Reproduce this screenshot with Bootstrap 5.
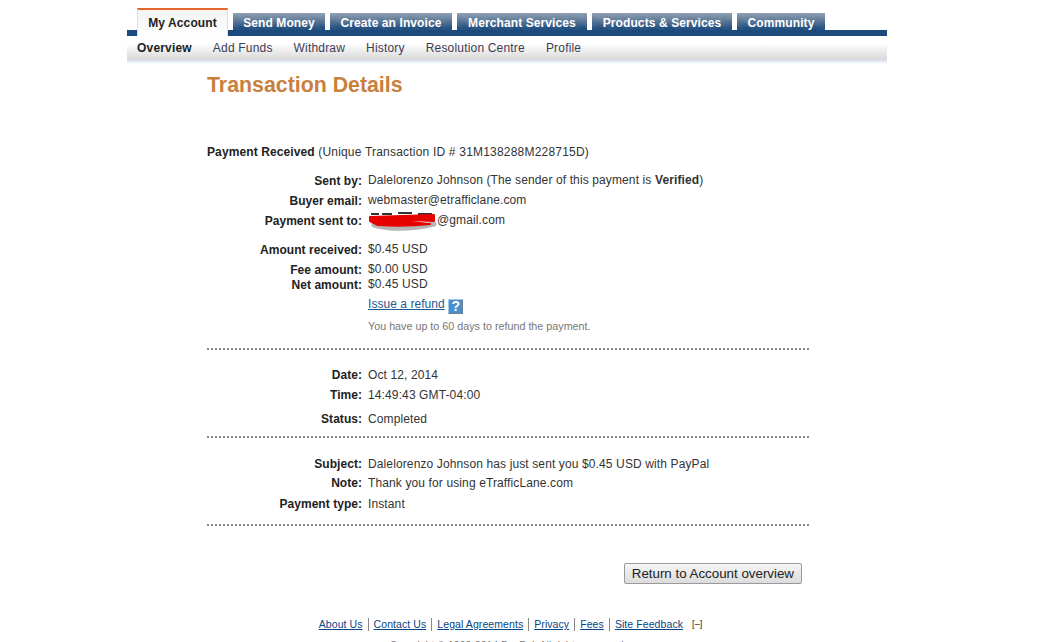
<!doctype html>
<html lang="en"><head><meta charset="utf-8"><title>Transaction Details</title>
<link rel="stylesheet" href="https://cdn.jsdelivr.net/npm/bootstrap@5.3.0/dist/css/bootstrap.min.css">
<style>
html,body{height:642px;overflow:hidden;background:#fff}
body{font-family:"Liberation Sans",Arial,sans-serif;font-size:12px;line-height:15px;color:#333;letter-spacing:.12px}
.shell{width:760px;margin-left:127px}
.tabbar{height:36px;padding:13px 0 0 10px;gap:5px;border-bottom:6px solid #1d4a7c}
.tabitem{display:block;height:17px;padding-top:4px;line-height:13px;text-align:center;background:repeating-linear-gradient(45deg,rgba(255,255,255,.07) 0 1px,transparent 1px 2px),linear-gradient(#8a9cb0,#5f7a98 40%,#1d4a7c 90%);color:#fff;font-weight:700;text-decoration:none;white-space:nowrap;letter-spacing:.1px}
.tabitem:nth-child(1){width:91px}
.tabitem:nth-child(2){width:92px}
.tabitem:nth-child(3){width:122px}
.tabitem:nth-child(4){width:130px}
.tabitem:nth-child(5){width:140px}
.tabitem:nth-child(6){width:88px}
.tabitem.on{height:28px;margin-top:-5px;margin-bottom:-6px;padding-top:7px;background:linear-gradient(#f3f3f3,#fff);border-top:2px solid #e0662d;border-left:1px solid #ddd;border-right:1px solid #ddd;color:#222;position:relative}
.subbar{height:24px;padding:5px 10px 0;gap:21px;background:linear-gradient(#fff 30%,#d8d8d8);letter-spacing:.185px}
.subshade{height:4px;background:linear-gradient(#d6e2f0,#fff)}
.subbar a{color:#3d3d55;text-decoration:none}
.subbar a.on{color:#222;font-weight:700}
.mainarea{width:602px;margin-left:80px}
.pagetitle{font-family:inherit;font-size:21.33px;line-height:24px;font-weight:700;color:#c9803c;margin:9px 0 0;letter-spacing:0}
.lead-row{margin-top:48px;margin-bottom:14px;letter-spacing:.2px}
.lead-row b{color:#222;letter-spacing:.1px}
.info{display:grid;grid-template-columns:155px 1fr;column-gap:6px;margin:0}
.info dt{text-align:right;font-weight:700;color:#222;margin:0;letter-spacing:.04px}
.info dd{margin:0}
.info-up{margin-top:-1px}
.info-low dt{transform:translateY(1px)}
.gap4{padding-top:4px}
.gap5{padding-top:5px}
.gap6{padding-top:6px}
.gap9{padding-top:9px}
.gap14{padding-top:14px}
.refund{color:#1d5a8e;text-decoration:underline;letter-spacing:.05px}
.helpbox{display:inline-block;width:15px;height:15px;background:#4a8ed0;color:#fff;font-weight:700;font-size:14px;line-height:13px;text-align:center;border:1px solid #6b7f94;border-top-color:#a8c8e8;border-left-color:#a8c8e8;margin-left:0;vertical-align:-3px;letter-spacing:0}
.hint{color:#777;font-size:10.75px;letter-spacing:0}
.dots{border:0;border-top:2px dotted #888;opacity:1;margin:0}
.rule-a{margin-top:14px;margin-bottom:18px}
.rule-b{margin-top:9px;margin-bottom:19px}
.rule-c{margin-top:12px}
.retrow{margin-top:37px;padding-right:7px}
.retbtn{background:linear-gradient(#f6f6f6,#dcdcdc);border:1px solid #9a9a9a;border-radius:2px;color:#222;font-size:13.33px;line-height:15px;padding:2px 7px;letter-spacing:0;font-family:inherit}
.foot{margin-top:33px;font-size:10.5px;letter-spacing:.08px}
.foot a{color:#084482;padding:0 5px;border-left:1px solid #888;line-height:13px}
.foot a:first-child{border-left:0}
.foldmark{margin-left:4px;font-size:9px;color:#222}
.copyline{font-size:10.5px;color:#777;text-align:center;margin-top:6px;letter-spacing:0}
.smudge{position:relative;display:inline-block;width:69px;height:15px;vertical-align:top}
.smudge svg{position:absolute;left:0;top:-1px}
</style></head><body>
<div class="shell">
<nav class="tabbar d-flex">
<a class="tabitem on" href="#">My Account</a>
<a class="tabitem" href="#">Send Money</a>
<a class="tabitem" href="#">Create an Invoice</a>
<a class="tabitem" href="#">Merchant Services</a>
<a class="tabitem" href="#">Products &amp; Services</a>
<a class="tabitem" href="#">Community</a>
</nav>
<nav class="subbar d-flex">
<a class="on" href="#">Overview</a><a href="#">Add Funds</a><a href="#">Withdraw</a><a href="#">History</a><a href="#">Resolution Centre</a><a href="#">Profile</a>
</nav>
<div class="subshade"></div>
<main class="mainarea">
<h1 class="pagetitle">Transaction Details</h1>
<p class="lead-row"><b>Payment Received</b> (Unique Transaction ID # 31M138288M228715D)</p>
<dl class="info info-up info-low">
<dt>Sent by:</dt><dd>Dalelorenzo Johnson (The sender of this payment is <b>Verified</b>)</dd>
<dt class="gap5">Buyer email:</dt><dd class="gap5">webmaster@etrafficlane.com</dd>
<dt class="gap5">Payment sent to:</dt><dd class="gap5"><span class="smudge"><svg width="70" height="20" viewBox="0 0 70 20" aria-hidden="true"><path d="M6 13 Q32 20 66 12" fill="none" stroke="#444" stroke-width="5" opacity=".4" stroke-linecap="round"/><path d="M3 2 h8 M14 2 h10 M30 1 h14 M50 2 h14" stroke="#333" stroke-width="2"/><path d="M2 5 L66 3 L66 9 L10 7 L62 12 Q36 15 10 13 L2 9Z" fill="#e60000" stroke="#e60000" stroke-width="2" stroke-linejoin="round"/></svg></span>@gmail.com</dd>
<dt class="gap14">Amount received:</dt><dd class="gap14">$0.45 USD</dd>
<dt class="gap5">Fee amount:</dt><dd class="gap5">$0.00 USD</dd>
<dt>Net amount:</dt><dd>$0.45 USD</dd>
<dt></dt><dd class="gap5"><a class="refund" href="#">Issue a refund</a> <span class="helpbox">?</span></dd>
<dt></dt><dd class="hint gap5">You have up to 60 days to refund the payment.</dd>
</dl>
<hr class="dots rule-a">
<dl class="info">
<dt>Date:</dt><dd>Oct 12, 2014</dd>
<dt class="gap5">Time:</dt><dd class="gap5">14:49:43 GMT-04:00</dd>
<dt class="gap9">Status:</dt><dd class="gap9">Completed</dd>
</dl>
<hr class="dots rule-b">
<dl class="info">
<dt>Subject:</dt><dd>Dalelorenzo Johnson has just sent you $0.45 USD with PayPal</dd>
<dt class="gap4">Note:</dt><dd class="gap4">Thank you for using eTrafficLane.com</dd>
<dt class="gap6">Payment type:</dt><dd class="gap6">Instant</dd>
</dl>
<hr class="dots rule-c">
<div class="retrow d-flex justify-content-end"><button class="retbtn" type="button">Return to Account overview</button></div>
<div class="foot d-flex justify-content-center align-items-center">
<a href="#">About Us</a><a href="#">Contact Us</a><a href="#">Legal Agreements</a><a href="#">Privacy</a><a href="#">Fees</a><a href="#">Site Feedback</a><span class="foldmark">[–]</span>
</div>
<div class="copyline">Copyright © 1999-2014 PayPal. All rights reserved.</div>
</main>
</div>
</body></html>
